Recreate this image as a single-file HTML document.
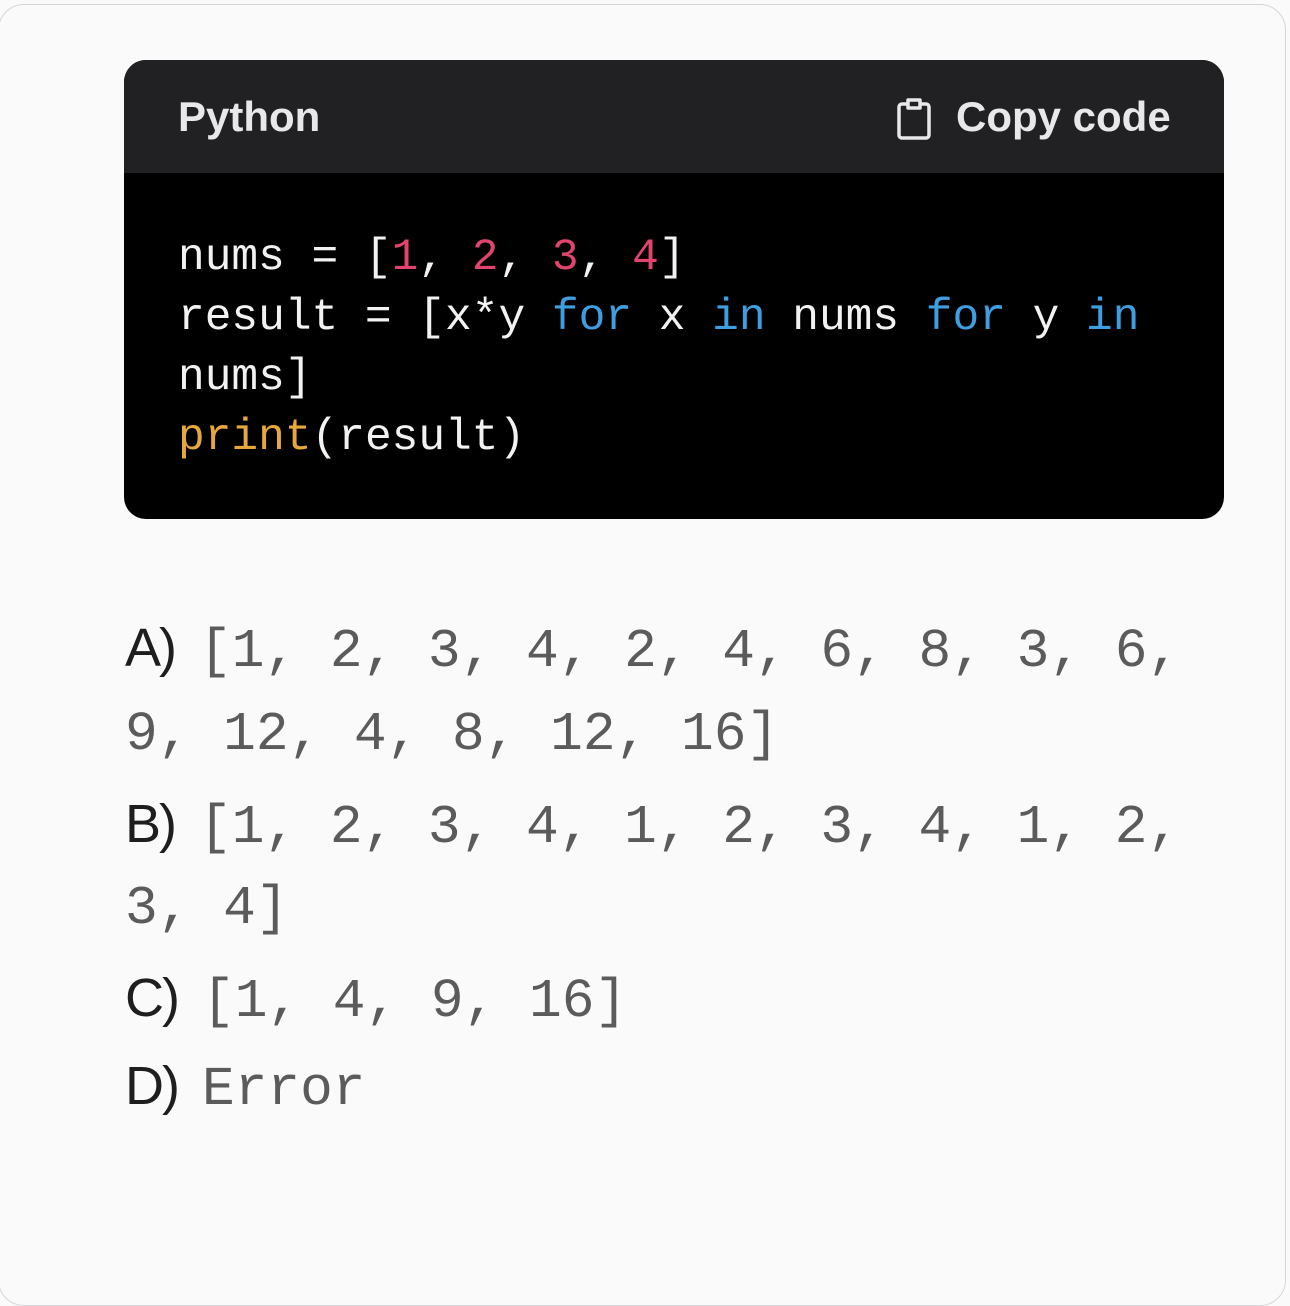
<!DOCTYPE html>
<html><head><meta charset="utf-8"><style>
body{margin:0;width:1290px;height:1266px;background:#fafafa;position:relative;overflow:hidden;font-family:"Liberation Sans",sans-serif}
.frame{position:absolute;left:-2px;top:4px;width:1286px;height:1300px;border:1.5px solid #d6d6d8;border-radius:26px;background:#fafafa}
.cb{position:absolute;left:124px;top:60px;width:1100px;height:459px;background:#000;border-radius:22px;overflow:hidden}
.hd{position:absolute;left:0;top:0;width:1100px;height:113px;background:#212123}
.ln{position:absolute;left:178px;font-family:"Liberation Mono",monospace;font-size:44.5px;line-height:60px;color:#f2f2f2;white-space:pre}
.n{color:#e0446f}.k{color:#3e9fe0}.p{color:#e8a73c}
.o{position:absolute;left:125px;font-family:"Liberation Mono",monospace;font-size:54.5px;line-height:88px;color:#5b5b5b;white-space:pre}
.o b{font-family:"Liberation Sans",sans-serif;font-weight:normal;color:#1e1e1e;font-size:54px;letter-spacing:-2px;margin-right:24px}
</style></head><body>
<div class="frame"></div>
<div class="cb"><div class="hd"></div></div>
<div style="position:absolute;left:178px;top:92px;font-size:42px;line-height:50px;color:#e8e8ea;font-weight:bold;">Python</div>
<svg style="position:absolute;left:895px;top:96px" width="40" height="46" viewBox="0 0 40 46"><path d="M12 8H7a3 3 0 0 0-3 3v28a3 3 0 0 0 3 3h24a3 3 0 0 0 3-3V11a3 3 0 0 0-3-3h-5M13 4h12v8H13z" fill="none" stroke="#e8e8ea" stroke-width="3.5" stroke-linejoin="round"/></svg>
<div style="position:absolute;left:956px;top:92px;font-size:42px;line-height:50px;color:#e8e8ea;font-weight:bold;">Copy code</div>
<div class="ln" style="top:228px">nums = [<span class="n">1</span>, <span class="n">2</span>, <span class="n">3</span>, <span class="n">4</span>]</div>
<div class="ln" style="top:288px">result = [x*y <span class="k">for</span> x <span class="k">in</span> nums <span class="k">for</span> y <span class="k">in</span></div>
<div class="ln" style="top:348px">nums]</div>
<div class="ln" style="top:408px"><span class="p">print</span>(result)</div>
<div class="o" style="top:604px"><b>A)</b>[1, 2, 3, 4, 2, 4, 6, 8, 3, 6,</div>
<div class="o" style="top:692px">9, 12, 4, 8, 12, 16]</div>
<div class="o" style="top:780px"><b>B)</b>[1, 2, 3, 4, 1, 2, 3, 4, 1, 2,</div>
<div class="o" style="top:866px">3, 4]</div>
<div class="o" style="top:954px"><b>C)</b>[1, 4, 9, 16]</div>
<div class="o" style="top:1042px"><b>D)</b>Error</div>
</body></html>
